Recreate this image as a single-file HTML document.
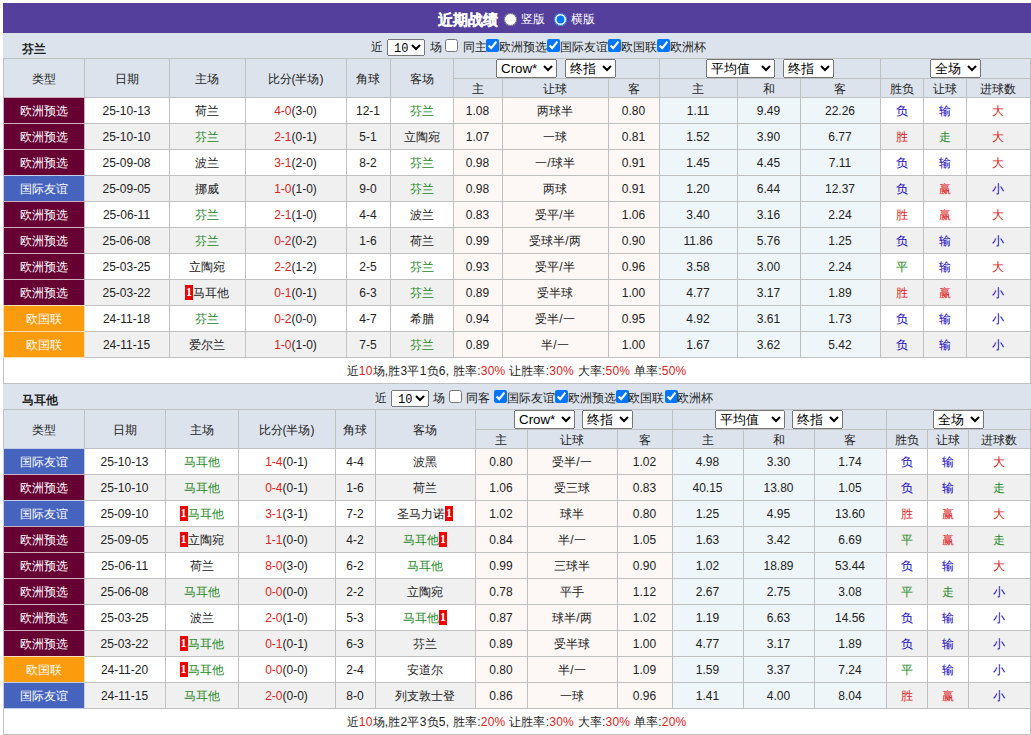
<!DOCTYPE html>
<html><head><meta charset="utf-8"><style>
html,body{margin:0;padding:0;background:#fff;overflow:hidden}
body{width:1031px;height:735px;position:relative;font-family:"Liberation Sans",sans-serif;font-size:12px;color:#222}
.c{position:absolute;border:1px solid #c0c0c0;text-align:center;white-space:nowrap;overflow:hidden}
.ty{border-color:rgba(255,255,255,.68);z-index:1}
.r{color:#d22}
.g{color:#282}
.rc{display:inline-block;background:#e00;color:#fff;width:8px;height:15px;line-height:15px;text-align:center;vertical-align:1px;font-family:"Liberation Serif",serif;font-size:12px;font-weight:bold}
.top{position:absolute;left:3px;top:3px;width:1028px;height:30px;background:#54409c}
.bar{position:absolute;left:3px;width:1028px;height:25px;background:#dce3ed}
.tt{position:absolute;left:22px;height:25px;line-height:32px;font-weight:bold}
.ab{position:absolute}
.wt{color:#fff}
.b{font-weight:bold}
.ft{position:absolute;line-height:21px;padding-top:1px;white-space:nowrap}
.fs{position:absolute;width:38px;height:17px;font-family:"Liberation Mono",monospace;font-size:12px;padding:1px 0 0 2px;margin:0}
.cb{position:absolute;margin:0;width:13px;height:13px}
.sel{position:absolute;z-index:2;height:19px;font-family:"Liberation Sans",sans-serif;font-size:13.333px;padding:0;margin:0}
</style></head><body>
<div class="top"></div>
<div class="ab wt b" style="left:438px;top:5px;font-size:15px;line-height:30px;-webkit-text-stroke:.3px #fff">近期战绩</div>
<input type="radio" name="v" class="ab" style="left:504px;top:13px;margin:0;width:13px;height:13px">
<div class="ab wt" style="left:521px;top:4px;line-height:31px">竖版</div>
<input type="radio" name="v" checked class="ab" style="left:554px;top:13px;margin:0;width:13px;height:13px">
<div class="ab wt" style="left:571px;top:4px;line-height:31px">横版</div>
<div class="bar" style="top:33px"></div>
<div class="tt" style="top:33px">芬兰</div>
<div class="ft" style="left:371px;top:36px">近</div>
<select class="fs" style="left:387px;top:39px"><option>10</option></select>
<div class="ft" style="left:430px;top:36px">场</div>
<input type="checkbox" class="cb" style="left:445px;top:39px">
<div class="ft" style="left:463px;top:36px">同主</div>
<input type="checkbox" checked class="cb" style="left:486px;top:39px">
<div class="ft" style="left:499px;top:36px">欧洲预选</div>
<input type="checkbox" checked class="cb" style="left:547px;top:39px">
<div class="ft" style="left:560px;top:36px">国际友谊</div>
<input type="checkbox" checked class="cb" style="left:608px;top:39px">
<div class="ft" style="left:621px;top:36px">欧国联</div>
<input type="checkbox" checked class="cb" style="left:657px;top:39px">
<div class="ft" style="left:670px;top:36px">欧洲杯</div>
<select class="sel" style="left:496px;top:59px;width:61px"><option>Crow*</option></select>
<select class="sel" style="left:565px;top:59px;width:51px"><option>终指</option></select>
<select class="sel" style="left:706px;top:59px;width:69px"><option>平均值</option></select>
<select class="sel" style="left:783px;top:59px;width:51px"><option>终指</option></select>
<select class="sel" style="left:930px;top:59px;width:51px"><option>全场</option></select>
<div class="c h" style="left:3px;top:58px;width:79px;padding-right:1px;height:37px;padding-top:1px;line-height:38px;background:#dce3ed;">类型</div>
<div class="c h" style="left:84px;top:58px;width:83px;padding-right:1px;height:37px;padding-top:1px;line-height:38px;background:#dce3ed;">日期</div>
<div class="c h" style="left:169px;top:58px;width:74px;padding-right:1px;height:37px;padding-top:1px;line-height:38px;background:#dce3ed;">主场</div>
<div class="c h" style="left:245px;top:58px;width:99px;padding-right:1px;height:37px;padding-top:1px;line-height:38px;background:#dce3ed;">比分(半场)</div>
<div class="c h" style="left:346px;top:58px;width:42px;padding-right:1px;height:37px;padding-top:1px;line-height:38px;background:#dce3ed;">角球</div>
<div class="c h" style="left:390px;top:58px;width:61px;padding-right:1px;height:37px;padding-top:1px;line-height:38px;background:#dce3ed;">客场</div>
<div class="c h" style="left:453px;top:58px;width:204px;padding-right:1px;height:18px;padding-top:1px;line-height:19px;background:#dce3ed;"></div>
<div class="c h" style="left:659px;top:58px;width:219px;padding-right:1px;height:18px;padding-top:1px;line-height:19px;background:#dce3ed;"></div>
<div class="c h" style="left:880px;top:58px;width:148px;padding-right:1px;height:18px;padding-top:1px;line-height:19px;background:#dce3ed;"></div>
<div class="c h" style="left:453px;top:78px;width:47px;padding-right:1px;height:17px;padding-top:1px;line-height:18px;background:#dce3ed;">主</div>
<div class="c h" style="left:502px;top:78px;width:104px;padding-right:1px;height:17px;padding-top:1px;line-height:18px;background:#dce3ed;">让球</div>
<div class="c h" style="left:608px;top:78px;width:49px;padding-right:1px;height:17px;padding-top:1px;line-height:18px;background:#dce3ed;">客</div>
<div class="c h" style="left:659px;top:78px;width:76px;padding-right:1px;height:17px;padding-top:1px;line-height:18px;background:#dce3ed;">主</div>
<div class="c h" style="left:737px;top:78px;width:61px;padding-right:1px;height:17px;padding-top:1px;line-height:18px;background:#dce3ed;">和</div>
<div class="c h" style="left:800px;top:78px;width:78px;padding-right:1px;height:17px;padding-top:1px;line-height:18px;background:#dce3ed;">客</div>
<div class="c h" style="left:880px;top:78px;width:41px;padding-right:1px;height:17px;padding-top:1px;line-height:18px;background:#dce3ed;">胜负</div>
<div class="c h" style="left:923px;top:78px;width:41px;padding-right:1px;height:17px;padding-top:1px;line-height:18px;background:#dce3ed;">让球</div>
<div class="c h" style="left:966px;top:78px;width:62px;padding-right:1px;height:17px;padding-top:1px;line-height:18px;background:#dce3ed;">进球数</div>
<div class="c ty" style="left:3px;top:97px;width:79px;padding-right:1px;height:24px;padding-top:1px;line-height:25px;background:#660033;color:#fff;">欧洲预选</div>
<div class="c" style="left:84px;top:97px;width:83px;padding-right:1px;height:24px;padding-top:1px;line-height:25px;background:#fff;">25-10-13</div>
<div class="c" style="left:169px;top:97px;width:74px;padding-right:1px;height:24px;padding-top:1px;line-height:25px;background:#fff;">荷兰</div>
<div class="c" style="left:245px;top:97px;width:99px;padding-right:1px;height:24px;padding-top:1px;line-height:25px;background:#fff;"><span class="r">4-0</span>(3-0)</div>
<div class="c" style="left:346px;top:97px;width:42px;padding-right:1px;height:24px;padding-top:1px;line-height:25px;background:#fff;">12-1</div>
<div class="c" style="left:390px;top:97px;width:61px;padding-right:1px;height:24px;padding-top:1px;line-height:25px;background:#fff;"><span class="g">芬兰</span></div>
<div class="c" style="left:453px;top:97px;width:47px;padding-right:1px;height:24px;padding-top:1px;line-height:25px;background:#fdf8f6;">1.08</div>
<div class="c" style="left:502px;top:97px;width:104px;padding-right:1px;height:24px;padding-top:1px;line-height:25px;background:#fdf8f6;">两球半</div>
<div class="c" style="left:608px;top:97px;width:49px;padding-right:1px;height:24px;padding-top:1px;line-height:25px;background:#fdf8f6;">0.80</div>
<div class="c" style="left:659px;top:97px;width:76px;padding-right:1px;height:24px;padding-top:1px;line-height:25px;background:#eef6fa;">1.11</div>
<div class="c" style="left:737px;top:97px;width:61px;padding-right:1px;height:24px;padding-top:1px;line-height:25px;background:#eef6fa;">9.49</div>
<div class="c" style="left:800px;top:97px;width:78px;padding-right:1px;height:24px;padding-top:1px;line-height:25px;background:#eef6fa;">22.26</div>
<div class="c" style="left:880px;top:97px;width:41px;padding-right:1px;height:24px;padding-top:1px;line-height:25px;background:#fff;color:#10b;">负</div>
<div class="c" style="left:923px;top:97px;width:41px;padding-right:1px;height:24px;padding-top:1px;line-height:25px;background:#fff;color:#10b;">输</div>
<div class="c" style="left:966px;top:97px;width:62px;padding-right:1px;height:24px;padding-top:1px;line-height:25px;background:#fff;color:#d22;">大</div>
<div class="c ty" style="left:3px;top:123px;width:79px;padding-right:1px;height:24px;padding-top:1px;line-height:25px;background:#660033;color:#fff;">欧洲预选</div>
<div class="c" style="left:84px;top:123px;width:83px;padding-right:1px;height:24px;padding-top:1px;line-height:25px;background:#f0f0f0;">25-10-10</div>
<div class="c" style="left:169px;top:123px;width:74px;padding-right:1px;height:24px;padding-top:1px;line-height:25px;background:#f0f0f0;"><span class="g">芬兰</span></div>
<div class="c" style="left:245px;top:123px;width:99px;padding-right:1px;height:24px;padding-top:1px;line-height:25px;background:#f0f0f0;"><span class="r">2-1</span>(0-1)</div>
<div class="c" style="left:346px;top:123px;width:42px;padding-right:1px;height:24px;padding-top:1px;line-height:25px;background:#f0f0f0;">5-1</div>
<div class="c" style="left:390px;top:123px;width:61px;padding-right:1px;height:24px;padding-top:1px;line-height:25px;background:#f0f0f0;">立陶宛</div>
<div class="c" style="left:453px;top:123px;width:47px;padding-right:1px;height:24px;padding-top:1px;line-height:25px;background:#fdf8f6;">1.07</div>
<div class="c" style="left:502px;top:123px;width:104px;padding-right:1px;height:24px;padding-top:1px;line-height:25px;background:#fdf8f6;">一球</div>
<div class="c" style="left:608px;top:123px;width:49px;padding-right:1px;height:24px;padding-top:1px;line-height:25px;background:#fdf8f6;">0.81</div>
<div class="c" style="left:659px;top:123px;width:76px;padding-right:1px;height:24px;padding-top:1px;line-height:25px;background:#eef6fa;">1.52</div>
<div class="c" style="left:737px;top:123px;width:61px;padding-right:1px;height:24px;padding-top:1px;line-height:25px;background:#eef6fa;">3.90</div>
<div class="c" style="left:800px;top:123px;width:78px;padding-right:1px;height:24px;padding-top:1px;line-height:25px;background:#eef6fa;">6.77</div>
<div class="c" style="left:880px;top:123px;width:41px;padding-right:1px;height:24px;padding-top:1px;line-height:25px;background:#f0f0f0;color:#d22;">胜</div>
<div class="c" style="left:923px;top:123px;width:41px;padding-right:1px;height:24px;padding-top:1px;line-height:25px;background:#f0f0f0;color:#282;">走</div>
<div class="c" style="left:966px;top:123px;width:62px;padding-right:1px;height:24px;padding-top:1px;line-height:25px;background:#f0f0f0;color:#d22;">大</div>
<div class="c ty" style="left:3px;top:149px;width:79px;padding-right:1px;height:24px;padding-top:1px;line-height:25px;background:#660033;color:#fff;">欧洲预选</div>
<div class="c" style="left:84px;top:149px;width:83px;padding-right:1px;height:24px;padding-top:1px;line-height:25px;background:#fff;">25-09-08</div>
<div class="c" style="left:169px;top:149px;width:74px;padding-right:1px;height:24px;padding-top:1px;line-height:25px;background:#fff;">波兰</div>
<div class="c" style="left:245px;top:149px;width:99px;padding-right:1px;height:24px;padding-top:1px;line-height:25px;background:#fff;"><span class="r">3-1</span>(2-0)</div>
<div class="c" style="left:346px;top:149px;width:42px;padding-right:1px;height:24px;padding-top:1px;line-height:25px;background:#fff;">8-2</div>
<div class="c" style="left:390px;top:149px;width:61px;padding-right:1px;height:24px;padding-top:1px;line-height:25px;background:#fff;"><span class="g">芬兰</span></div>
<div class="c" style="left:453px;top:149px;width:47px;padding-right:1px;height:24px;padding-top:1px;line-height:25px;background:#fdf8f6;">0.98</div>
<div class="c" style="left:502px;top:149px;width:104px;padding-right:1px;height:24px;padding-top:1px;line-height:25px;background:#fdf8f6;">一/球半</div>
<div class="c" style="left:608px;top:149px;width:49px;padding-right:1px;height:24px;padding-top:1px;line-height:25px;background:#fdf8f6;">0.91</div>
<div class="c" style="left:659px;top:149px;width:76px;padding-right:1px;height:24px;padding-top:1px;line-height:25px;background:#eef6fa;">1.45</div>
<div class="c" style="left:737px;top:149px;width:61px;padding-right:1px;height:24px;padding-top:1px;line-height:25px;background:#eef6fa;">4.45</div>
<div class="c" style="left:800px;top:149px;width:78px;padding-right:1px;height:24px;padding-top:1px;line-height:25px;background:#eef6fa;">7.11</div>
<div class="c" style="left:880px;top:149px;width:41px;padding-right:1px;height:24px;padding-top:1px;line-height:25px;background:#fff;color:#10b;">负</div>
<div class="c" style="left:923px;top:149px;width:41px;padding-right:1px;height:24px;padding-top:1px;line-height:25px;background:#fff;color:#10b;">输</div>
<div class="c" style="left:966px;top:149px;width:62px;padding-right:1px;height:24px;padding-top:1px;line-height:25px;background:#fff;color:#d22;">大</div>
<div class="c ty" style="left:3px;top:175px;width:79px;padding-right:1px;height:24px;padding-top:1px;line-height:25px;background:#4664bd;color:#fff;">国际友谊</div>
<div class="c" style="left:84px;top:175px;width:83px;padding-right:1px;height:24px;padding-top:1px;line-height:25px;background:#f0f0f0;">25-09-05</div>
<div class="c" style="left:169px;top:175px;width:74px;padding-right:1px;height:24px;padding-top:1px;line-height:25px;background:#f0f0f0;">挪威</div>
<div class="c" style="left:245px;top:175px;width:99px;padding-right:1px;height:24px;padding-top:1px;line-height:25px;background:#f0f0f0;"><span class="r">1-0</span>(1-0)</div>
<div class="c" style="left:346px;top:175px;width:42px;padding-right:1px;height:24px;padding-top:1px;line-height:25px;background:#f0f0f0;">9-0</div>
<div class="c" style="left:390px;top:175px;width:61px;padding-right:1px;height:24px;padding-top:1px;line-height:25px;background:#f0f0f0;"><span class="g">芬兰</span></div>
<div class="c" style="left:453px;top:175px;width:47px;padding-right:1px;height:24px;padding-top:1px;line-height:25px;background:#fdf8f6;">0.98</div>
<div class="c" style="left:502px;top:175px;width:104px;padding-right:1px;height:24px;padding-top:1px;line-height:25px;background:#fdf8f6;">两球</div>
<div class="c" style="left:608px;top:175px;width:49px;padding-right:1px;height:24px;padding-top:1px;line-height:25px;background:#fdf8f6;">0.91</div>
<div class="c" style="left:659px;top:175px;width:76px;padding-right:1px;height:24px;padding-top:1px;line-height:25px;background:#eef6fa;">1.20</div>
<div class="c" style="left:737px;top:175px;width:61px;padding-right:1px;height:24px;padding-top:1px;line-height:25px;background:#eef6fa;">6.44</div>
<div class="c" style="left:800px;top:175px;width:78px;padding-right:1px;height:24px;padding-top:1px;line-height:25px;background:#eef6fa;">12.37</div>
<div class="c" style="left:880px;top:175px;width:41px;padding-right:1px;height:24px;padding-top:1px;line-height:25px;background:#f0f0f0;color:#10b;">负</div>
<div class="c" style="left:923px;top:175px;width:41px;padding-right:1px;height:24px;padding-top:1px;line-height:25px;background:#f0f0f0;color:#d22;">赢</div>
<div class="c" style="left:966px;top:175px;width:62px;padding-right:1px;height:24px;padding-top:1px;line-height:25px;background:#f0f0f0;color:#10b;">小</div>
<div class="c ty" style="left:3px;top:201px;width:79px;padding-right:1px;height:24px;padding-top:1px;line-height:25px;background:#660033;color:#fff;">欧洲预选</div>
<div class="c" style="left:84px;top:201px;width:83px;padding-right:1px;height:24px;padding-top:1px;line-height:25px;background:#fff;">25-06-11</div>
<div class="c" style="left:169px;top:201px;width:74px;padding-right:1px;height:24px;padding-top:1px;line-height:25px;background:#fff;"><span class="g">芬兰</span></div>
<div class="c" style="left:245px;top:201px;width:99px;padding-right:1px;height:24px;padding-top:1px;line-height:25px;background:#fff;"><span class="r">2-1</span>(1-0)</div>
<div class="c" style="left:346px;top:201px;width:42px;padding-right:1px;height:24px;padding-top:1px;line-height:25px;background:#fff;">4-4</div>
<div class="c" style="left:390px;top:201px;width:61px;padding-right:1px;height:24px;padding-top:1px;line-height:25px;background:#fff;">波兰</div>
<div class="c" style="left:453px;top:201px;width:47px;padding-right:1px;height:24px;padding-top:1px;line-height:25px;background:#fdf8f6;">0.83</div>
<div class="c" style="left:502px;top:201px;width:104px;padding-right:1px;height:24px;padding-top:1px;line-height:25px;background:#fdf8f6;">受平/半</div>
<div class="c" style="left:608px;top:201px;width:49px;padding-right:1px;height:24px;padding-top:1px;line-height:25px;background:#fdf8f6;">1.06</div>
<div class="c" style="left:659px;top:201px;width:76px;padding-right:1px;height:24px;padding-top:1px;line-height:25px;background:#eef6fa;">3.40</div>
<div class="c" style="left:737px;top:201px;width:61px;padding-right:1px;height:24px;padding-top:1px;line-height:25px;background:#eef6fa;">3.16</div>
<div class="c" style="left:800px;top:201px;width:78px;padding-right:1px;height:24px;padding-top:1px;line-height:25px;background:#eef6fa;">2.24</div>
<div class="c" style="left:880px;top:201px;width:41px;padding-right:1px;height:24px;padding-top:1px;line-height:25px;background:#fff;color:#d22;">胜</div>
<div class="c" style="left:923px;top:201px;width:41px;padding-right:1px;height:24px;padding-top:1px;line-height:25px;background:#fff;color:#d22;">赢</div>
<div class="c" style="left:966px;top:201px;width:62px;padding-right:1px;height:24px;padding-top:1px;line-height:25px;background:#fff;color:#d22;">大</div>
<div class="c ty" style="left:3px;top:227px;width:79px;padding-right:1px;height:24px;padding-top:1px;line-height:25px;background:#660033;color:#fff;">欧洲预选</div>
<div class="c" style="left:84px;top:227px;width:83px;padding-right:1px;height:24px;padding-top:1px;line-height:25px;background:#f0f0f0;">25-06-08</div>
<div class="c" style="left:169px;top:227px;width:74px;padding-right:1px;height:24px;padding-top:1px;line-height:25px;background:#f0f0f0;"><span class="g">芬兰</span></div>
<div class="c" style="left:245px;top:227px;width:99px;padding-right:1px;height:24px;padding-top:1px;line-height:25px;background:#f0f0f0;"><span class="r">0-2</span>(0-2)</div>
<div class="c" style="left:346px;top:227px;width:42px;padding-right:1px;height:24px;padding-top:1px;line-height:25px;background:#f0f0f0;">1-6</div>
<div class="c" style="left:390px;top:227px;width:61px;padding-right:1px;height:24px;padding-top:1px;line-height:25px;background:#f0f0f0;">荷兰</div>
<div class="c" style="left:453px;top:227px;width:47px;padding-right:1px;height:24px;padding-top:1px;line-height:25px;background:#fdf8f6;">0.99</div>
<div class="c" style="left:502px;top:227px;width:104px;padding-right:1px;height:24px;padding-top:1px;line-height:25px;background:#fdf8f6;">受球半/两</div>
<div class="c" style="left:608px;top:227px;width:49px;padding-right:1px;height:24px;padding-top:1px;line-height:25px;background:#fdf8f6;">0.90</div>
<div class="c" style="left:659px;top:227px;width:76px;padding-right:1px;height:24px;padding-top:1px;line-height:25px;background:#eef6fa;">11.86</div>
<div class="c" style="left:737px;top:227px;width:61px;padding-right:1px;height:24px;padding-top:1px;line-height:25px;background:#eef6fa;">5.76</div>
<div class="c" style="left:800px;top:227px;width:78px;padding-right:1px;height:24px;padding-top:1px;line-height:25px;background:#eef6fa;">1.25</div>
<div class="c" style="left:880px;top:227px;width:41px;padding-right:1px;height:24px;padding-top:1px;line-height:25px;background:#f0f0f0;color:#10b;">负</div>
<div class="c" style="left:923px;top:227px;width:41px;padding-right:1px;height:24px;padding-top:1px;line-height:25px;background:#f0f0f0;color:#10b;">输</div>
<div class="c" style="left:966px;top:227px;width:62px;padding-right:1px;height:24px;padding-top:1px;line-height:25px;background:#f0f0f0;color:#10b;">小</div>
<div class="c ty" style="left:3px;top:253px;width:79px;padding-right:1px;height:24px;padding-top:1px;line-height:25px;background:#660033;color:#fff;">欧洲预选</div>
<div class="c" style="left:84px;top:253px;width:83px;padding-right:1px;height:24px;padding-top:1px;line-height:25px;background:#fff;">25-03-25</div>
<div class="c" style="left:169px;top:253px;width:74px;padding-right:1px;height:24px;padding-top:1px;line-height:25px;background:#fff;">立陶宛</div>
<div class="c" style="left:245px;top:253px;width:99px;padding-right:1px;height:24px;padding-top:1px;line-height:25px;background:#fff;"><span class="r">2-2</span>(1-2)</div>
<div class="c" style="left:346px;top:253px;width:42px;padding-right:1px;height:24px;padding-top:1px;line-height:25px;background:#fff;">2-5</div>
<div class="c" style="left:390px;top:253px;width:61px;padding-right:1px;height:24px;padding-top:1px;line-height:25px;background:#fff;"><span class="g">芬兰</span></div>
<div class="c" style="left:453px;top:253px;width:47px;padding-right:1px;height:24px;padding-top:1px;line-height:25px;background:#fdf8f6;">0.93</div>
<div class="c" style="left:502px;top:253px;width:104px;padding-right:1px;height:24px;padding-top:1px;line-height:25px;background:#fdf8f6;">受平/半</div>
<div class="c" style="left:608px;top:253px;width:49px;padding-right:1px;height:24px;padding-top:1px;line-height:25px;background:#fdf8f6;">0.96</div>
<div class="c" style="left:659px;top:253px;width:76px;padding-right:1px;height:24px;padding-top:1px;line-height:25px;background:#eef6fa;">3.58</div>
<div class="c" style="left:737px;top:253px;width:61px;padding-right:1px;height:24px;padding-top:1px;line-height:25px;background:#eef6fa;">3.00</div>
<div class="c" style="left:800px;top:253px;width:78px;padding-right:1px;height:24px;padding-top:1px;line-height:25px;background:#eef6fa;">2.24</div>
<div class="c" style="left:880px;top:253px;width:41px;padding-right:1px;height:24px;padding-top:1px;line-height:25px;background:#fff;color:#282;">平</div>
<div class="c" style="left:923px;top:253px;width:41px;padding-right:1px;height:24px;padding-top:1px;line-height:25px;background:#fff;color:#10b;">输</div>
<div class="c" style="left:966px;top:253px;width:62px;padding-right:1px;height:24px;padding-top:1px;line-height:25px;background:#fff;color:#d22;">大</div>
<div class="c ty" style="left:3px;top:279px;width:79px;padding-right:1px;height:24px;padding-top:1px;line-height:25px;background:#660033;color:#fff;">欧洲预选</div>
<div class="c" style="left:84px;top:279px;width:83px;padding-right:1px;height:24px;padding-top:1px;line-height:25px;background:#f0f0f0;">25-03-22</div>
<div class="c" style="left:169px;top:279px;width:74px;padding-right:1px;height:24px;padding-top:1px;line-height:25px;background:#f0f0f0;"><span class="rc">1</span>马耳他</div>
<div class="c" style="left:245px;top:279px;width:99px;padding-right:1px;height:24px;padding-top:1px;line-height:25px;background:#f0f0f0;"><span class="r">0-1</span>(0-1)</div>
<div class="c" style="left:346px;top:279px;width:42px;padding-right:1px;height:24px;padding-top:1px;line-height:25px;background:#f0f0f0;">6-3</div>
<div class="c" style="left:390px;top:279px;width:61px;padding-right:1px;height:24px;padding-top:1px;line-height:25px;background:#f0f0f0;"><span class="g">芬兰</span></div>
<div class="c" style="left:453px;top:279px;width:47px;padding-right:1px;height:24px;padding-top:1px;line-height:25px;background:#fdf8f6;">0.89</div>
<div class="c" style="left:502px;top:279px;width:104px;padding-right:1px;height:24px;padding-top:1px;line-height:25px;background:#fdf8f6;">受半球</div>
<div class="c" style="left:608px;top:279px;width:49px;padding-right:1px;height:24px;padding-top:1px;line-height:25px;background:#fdf8f6;">1.00</div>
<div class="c" style="left:659px;top:279px;width:76px;padding-right:1px;height:24px;padding-top:1px;line-height:25px;background:#eef6fa;">4.77</div>
<div class="c" style="left:737px;top:279px;width:61px;padding-right:1px;height:24px;padding-top:1px;line-height:25px;background:#eef6fa;">3.17</div>
<div class="c" style="left:800px;top:279px;width:78px;padding-right:1px;height:24px;padding-top:1px;line-height:25px;background:#eef6fa;">1.89</div>
<div class="c" style="left:880px;top:279px;width:41px;padding-right:1px;height:24px;padding-top:1px;line-height:25px;background:#f0f0f0;color:#d22;">胜</div>
<div class="c" style="left:923px;top:279px;width:41px;padding-right:1px;height:24px;padding-top:1px;line-height:25px;background:#f0f0f0;color:#d22;">赢</div>
<div class="c" style="left:966px;top:279px;width:62px;padding-right:1px;height:24px;padding-top:1px;line-height:25px;background:#f0f0f0;color:#10b;">小</div>
<div class="c ty" style="left:3px;top:305px;width:79px;padding-right:1px;height:24px;padding-top:1px;line-height:25px;background:#fa9c0d;color:#fff;">欧国联</div>
<div class="c" style="left:84px;top:305px;width:83px;padding-right:1px;height:24px;padding-top:1px;line-height:25px;background:#fff;">24-11-18</div>
<div class="c" style="left:169px;top:305px;width:74px;padding-right:1px;height:24px;padding-top:1px;line-height:25px;background:#fff;"><span class="g">芬兰</span></div>
<div class="c" style="left:245px;top:305px;width:99px;padding-right:1px;height:24px;padding-top:1px;line-height:25px;background:#fff;"><span class="r">0-2</span>(0-0)</div>
<div class="c" style="left:346px;top:305px;width:42px;padding-right:1px;height:24px;padding-top:1px;line-height:25px;background:#fff;">4-7</div>
<div class="c" style="left:390px;top:305px;width:61px;padding-right:1px;height:24px;padding-top:1px;line-height:25px;background:#fff;">希腊</div>
<div class="c" style="left:453px;top:305px;width:47px;padding-right:1px;height:24px;padding-top:1px;line-height:25px;background:#fdf8f6;">0.94</div>
<div class="c" style="left:502px;top:305px;width:104px;padding-right:1px;height:24px;padding-top:1px;line-height:25px;background:#fdf8f6;">受半/一</div>
<div class="c" style="left:608px;top:305px;width:49px;padding-right:1px;height:24px;padding-top:1px;line-height:25px;background:#fdf8f6;">0.95</div>
<div class="c" style="left:659px;top:305px;width:76px;padding-right:1px;height:24px;padding-top:1px;line-height:25px;background:#eef6fa;">4.92</div>
<div class="c" style="left:737px;top:305px;width:61px;padding-right:1px;height:24px;padding-top:1px;line-height:25px;background:#eef6fa;">3.61</div>
<div class="c" style="left:800px;top:305px;width:78px;padding-right:1px;height:24px;padding-top:1px;line-height:25px;background:#eef6fa;">1.73</div>
<div class="c" style="left:880px;top:305px;width:41px;padding-right:1px;height:24px;padding-top:1px;line-height:25px;background:#fff;color:#10b;">负</div>
<div class="c" style="left:923px;top:305px;width:41px;padding-right:1px;height:24px;padding-top:1px;line-height:25px;background:#fff;color:#10b;">输</div>
<div class="c" style="left:966px;top:305px;width:62px;padding-right:1px;height:24px;padding-top:1px;line-height:25px;background:#fff;color:#10b;">小</div>
<div class="c ty" style="left:3px;top:331px;width:79px;padding-right:1px;height:24px;padding-top:1px;line-height:25px;background:#fa9c0d;color:#fff;">欧国联</div>
<div class="c" style="left:84px;top:331px;width:83px;padding-right:1px;height:24px;padding-top:1px;line-height:25px;background:#f0f0f0;">24-11-15</div>
<div class="c" style="left:169px;top:331px;width:74px;padding-right:1px;height:24px;padding-top:1px;line-height:25px;background:#f0f0f0;">爱尔兰</div>
<div class="c" style="left:245px;top:331px;width:99px;padding-right:1px;height:24px;padding-top:1px;line-height:25px;background:#f0f0f0;"><span class="r">1-0</span>(1-0)</div>
<div class="c" style="left:346px;top:331px;width:42px;padding-right:1px;height:24px;padding-top:1px;line-height:25px;background:#f0f0f0;">7-5</div>
<div class="c" style="left:390px;top:331px;width:61px;padding-right:1px;height:24px;padding-top:1px;line-height:25px;background:#f0f0f0;"><span class="g">芬兰</span></div>
<div class="c" style="left:453px;top:331px;width:47px;padding-right:1px;height:24px;padding-top:1px;line-height:25px;background:#fdf8f6;">0.89</div>
<div class="c" style="left:502px;top:331px;width:104px;padding-right:1px;height:24px;padding-top:1px;line-height:25px;background:#fdf8f6;">半/一</div>
<div class="c" style="left:608px;top:331px;width:49px;padding-right:1px;height:24px;padding-top:1px;line-height:25px;background:#fdf8f6;">1.00</div>
<div class="c" style="left:659px;top:331px;width:76px;padding-right:1px;height:24px;padding-top:1px;line-height:25px;background:#eef6fa;">1.67</div>
<div class="c" style="left:737px;top:331px;width:61px;padding-right:1px;height:24px;padding-top:1px;line-height:25px;background:#eef6fa;">3.62</div>
<div class="c" style="left:800px;top:331px;width:78px;padding-right:1px;height:24px;padding-top:1px;line-height:25px;background:#eef6fa;">5.42</div>
<div class="c" style="left:880px;top:331px;width:41px;padding-right:1px;height:24px;padding-top:1px;line-height:25px;background:#f0f0f0;color:#10b;">负</div>
<div class="c" style="left:923px;top:331px;width:41px;padding-right:1px;height:24px;padding-top:1px;line-height:25px;background:#f0f0f0;color:#10b;">输</div>
<div class="c" style="left:966px;top:331px;width:62px;padding-right:1px;height:24px;padding-top:1px;line-height:25px;background:#f0f0f0;color:#10b;">小</div>
<div class="c" style="left:3px;top:357px;width:1025px;padding-right:1px;height:24px;padding-top:1px;line-height:25px;background:#fff;letter-spacing:.22px;">近<span class="r">10</span>场,胜3平1负6, 胜率:<span class="r">30%</span> 让胜率:<span class="r">30%</span> 大率:<span class="r">50%</span> 单率:<span class="r">50%</span></div>
<div class="bar" style="top:384px"></div>
<div class="tt" style="top:384px">马耳他</div>
<div class="ft" style="left:375px;top:387px">近</div>
<select class="fs" style="left:391px;top:390px"><option>10</option></select>
<div class="ft" style="left:433px;top:387px">场</div>
<input type="checkbox" class="cb" style="left:449px;top:390px">
<div class="ft" style="left:466px;top:387px">同客</div>
<input type="checkbox" checked class="cb" style="left:494px;top:390px">
<div class="ft" style="left:507px;top:387px">国际友谊</div>
<input type="checkbox" checked class="cb" style="left:555px;top:390px">
<div class="ft" style="left:568px;top:387px">欧洲预选</div>
<input type="checkbox" checked class="cb" style="left:616px;top:390px">
<div class="ft" style="left:628px;top:387px">欧国联</div>
<input type="checkbox" checked class="cb" style="left:665px;top:390px">
<div class="ft" style="left:677px;top:387px">欧洲杯</div>
<select class="sel" style="left:514px;top:410px;width:61px"><option>Crow*</option></select>
<select class="sel" style="left:582px;top:410px;width:51px"><option>终指</option></select>
<select class="sel" style="left:715px;top:410px;width:70px"><option>平均值</option></select>
<select class="sel" style="left:792px;top:410px;width:51px"><option>终指</option></select>
<select class="sel" style="left:933px;top:410px;width:51px"><option>全场</option></select>
<div class="c h" style="left:3px;top:409px;width:79px;padding-right:1px;height:37px;padding-top:1px;line-height:38px;background:#dce3ed;">类型</div>
<div class="c h" style="left:84px;top:409px;width:79px;padding-right:1px;height:37px;padding-top:1px;line-height:38px;background:#dce3ed;">日期</div>
<div class="c h" style="left:165px;top:409px;width:71px;padding-right:1px;height:37px;padding-top:1px;line-height:38px;background:#dce3ed;">主场</div>
<div class="c h" style="left:238px;top:409px;width:95px;padding-right:1px;height:37px;padding-top:1px;line-height:38px;background:#dce3ed;">比分(半场)</div>
<div class="c h" style="left:335px;top:409px;width:38px;padding-right:1px;height:37px;padding-top:1px;line-height:38px;background:#dce3ed;">角球</div>
<div class="c h" style="left:375px;top:409px;width:98px;padding-right:1px;height:37px;padding-top:1px;line-height:38px;background:#dce3ed;">客场</div>
<div class="c h" style="left:475px;top:409px;width:195px;padding-right:1px;height:18px;padding-top:1px;line-height:19px;background:#dce3ed;"></div>
<div class="c h" style="left:672px;top:409px;width:212px;padding-right:1px;height:18px;padding-top:1px;line-height:19px;background:#dce3ed;"></div>
<div class="c h" style="left:886px;top:409px;width:142px;padding-right:1px;height:18px;padding-top:1px;line-height:19px;background:#dce3ed;"></div>
<div class="c h" style="left:475px;top:429px;width:50px;padding-right:1px;height:17px;padding-top:1px;line-height:18px;background:#dce3ed;">主</div>
<div class="c h" style="left:527px;top:429px;width:88px;padding-right:1px;height:17px;padding-top:1px;line-height:18px;background:#dce3ed;">让球</div>
<div class="c h" style="left:617px;top:429px;width:53px;padding-right:1px;height:17px;padding-top:1px;line-height:18px;background:#dce3ed;">客</div>
<div class="c h" style="left:672px;top:429px;width:69px;padding-right:1px;height:17px;padding-top:1px;line-height:18px;background:#dce3ed;">主</div>
<div class="c h" style="left:743px;top:429px;width:69px;padding-right:1px;height:17px;padding-top:1px;line-height:18px;background:#dce3ed;">和</div>
<div class="c h" style="left:814px;top:429px;width:70px;padding-right:1px;height:17px;padding-top:1px;line-height:18px;background:#dce3ed;">客</div>
<div class="c h" style="left:886px;top:429px;width:39px;padding-right:1px;height:17px;padding-top:1px;line-height:18px;background:#dce3ed;">胜负</div>
<div class="c h" style="left:927px;top:429px;width:39px;padding-right:1px;height:17px;padding-top:1px;line-height:18px;background:#dce3ed;">让球</div>
<div class="c h" style="left:968px;top:429px;width:60px;padding-right:1px;height:17px;padding-top:1px;line-height:18px;background:#dce3ed;">进球数</div>
<div class="c ty" style="left:3px;top:448px;width:79px;padding-right:1px;height:24px;padding-top:1px;line-height:25px;background:#4664bd;color:#fff;">国际友谊</div>
<div class="c" style="left:84px;top:448px;width:79px;padding-right:1px;height:24px;padding-top:1px;line-height:25px;background:#fff;">25-10-13</div>
<div class="c" style="left:165px;top:448px;width:71px;padding-right:1px;height:24px;padding-top:1px;line-height:25px;background:#fff;"><span class="g">马耳他</span></div>
<div class="c" style="left:238px;top:448px;width:95px;padding-right:1px;height:24px;padding-top:1px;line-height:25px;background:#fff;"><span class="r">1-4</span>(0-1)</div>
<div class="c" style="left:335px;top:448px;width:38px;padding-right:1px;height:24px;padding-top:1px;line-height:25px;background:#fff;">4-4</div>
<div class="c" style="left:375px;top:448px;width:98px;padding-right:1px;height:24px;padding-top:1px;line-height:25px;background:#fff;">波黑</div>
<div class="c" style="left:475px;top:448px;width:50px;padding-right:1px;height:24px;padding-top:1px;line-height:25px;background:#fdf8f6;">0.80</div>
<div class="c" style="left:527px;top:448px;width:88px;padding-right:1px;height:24px;padding-top:1px;line-height:25px;background:#fdf8f6;">受半/一</div>
<div class="c" style="left:617px;top:448px;width:53px;padding-right:1px;height:24px;padding-top:1px;line-height:25px;background:#fdf8f6;">1.02</div>
<div class="c" style="left:672px;top:448px;width:69px;padding-right:1px;height:24px;padding-top:1px;line-height:25px;background:#eef6fa;">4.98</div>
<div class="c" style="left:743px;top:448px;width:69px;padding-right:1px;height:24px;padding-top:1px;line-height:25px;background:#eef6fa;">3.30</div>
<div class="c" style="left:814px;top:448px;width:70px;padding-right:1px;height:24px;padding-top:1px;line-height:25px;background:#eef6fa;">1.74</div>
<div class="c" style="left:886px;top:448px;width:39px;padding-right:1px;height:24px;padding-top:1px;line-height:25px;background:#fff;color:#10b;">负</div>
<div class="c" style="left:927px;top:448px;width:39px;padding-right:1px;height:24px;padding-top:1px;line-height:25px;background:#fff;color:#10b;">输</div>
<div class="c" style="left:968px;top:448px;width:60px;padding-right:1px;height:24px;padding-top:1px;line-height:25px;background:#fff;color:#d22;">大</div>
<div class="c ty" style="left:3px;top:474px;width:79px;padding-right:1px;height:24px;padding-top:1px;line-height:25px;background:#660033;color:#fff;">欧洲预选</div>
<div class="c" style="left:84px;top:474px;width:79px;padding-right:1px;height:24px;padding-top:1px;line-height:25px;background:#f0f0f0;">25-10-10</div>
<div class="c" style="left:165px;top:474px;width:71px;padding-right:1px;height:24px;padding-top:1px;line-height:25px;background:#f0f0f0;"><span class="g">马耳他</span></div>
<div class="c" style="left:238px;top:474px;width:95px;padding-right:1px;height:24px;padding-top:1px;line-height:25px;background:#f0f0f0;"><span class="r">0-4</span>(0-1)</div>
<div class="c" style="left:335px;top:474px;width:38px;padding-right:1px;height:24px;padding-top:1px;line-height:25px;background:#f0f0f0;">1-6</div>
<div class="c" style="left:375px;top:474px;width:98px;padding-right:1px;height:24px;padding-top:1px;line-height:25px;background:#f0f0f0;">荷兰</div>
<div class="c" style="left:475px;top:474px;width:50px;padding-right:1px;height:24px;padding-top:1px;line-height:25px;background:#fdf8f6;">1.06</div>
<div class="c" style="left:527px;top:474px;width:88px;padding-right:1px;height:24px;padding-top:1px;line-height:25px;background:#fdf8f6;">受三球</div>
<div class="c" style="left:617px;top:474px;width:53px;padding-right:1px;height:24px;padding-top:1px;line-height:25px;background:#fdf8f6;">0.83</div>
<div class="c" style="left:672px;top:474px;width:69px;padding-right:1px;height:24px;padding-top:1px;line-height:25px;background:#eef6fa;">40.15</div>
<div class="c" style="left:743px;top:474px;width:69px;padding-right:1px;height:24px;padding-top:1px;line-height:25px;background:#eef6fa;">13.80</div>
<div class="c" style="left:814px;top:474px;width:70px;padding-right:1px;height:24px;padding-top:1px;line-height:25px;background:#eef6fa;">1.05</div>
<div class="c" style="left:886px;top:474px;width:39px;padding-right:1px;height:24px;padding-top:1px;line-height:25px;background:#f0f0f0;color:#10b;">负</div>
<div class="c" style="left:927px;top:474px;width:39px;padding-right:1px;height:24px;padding-top:1px;line-height:25px;background:#f0f0f0;color:#10b;">输</div>
<div class="c" style="left:968px;top:474px;width:60px;padding-right:1px;height:24px;padding-top:1px;line-height:25px;background:#f0f0f0;color:#282;">走</div>
<div class="c ty" style="left:3px;top:500px;width:79px;padding-right:1px;height:24px;padding-top:1px;line-height:25px;background:#4664bd;color:#fff;">国际友谊</div>
<div class="c" style="left:84px;top:500px;width:79px;padding-right:1px;height:24px;padding-top:1px;line-height:25px;background:#fff;">25-09-10</div>
<div class="c" style="left:165px;top:500px;width:71px;padding-right:1px;height:24px;padding-top:1px;line-height:25px;background:#fff;"><span class="rc">1</span><span class="g">马耳他</span></div>
<div class="c" style="left:238px;top:500px;width:95px;padding-right:1px;height:24px;padding-top:1px;line-height:25px;background:#fff;"><span class="r">3-1</span>(3-1)</div>
<div class="c" style="left:335px;top:500px;width:38px;padding-right:1px;height:24px;padding-top:1px;line-height:25px;background:#fff;">7-2</div>
<div class="c" style="left:375px;top:500px;width:98px;padding-right:1px;height:24px;padding-top:1px;line-height:25px;background:#fff;">圣马力诺<span class="rc">1</span></div>
<div class="c" style="left:475px;top:500px;width:50px;padding-right:1px;height:24px;padding-top:1px;line-height:25px;background:#fdf8f6;">1.02</div>
<div class="c" style="left:527px;top:500px;width:88px;padding-right:1px;height:24px;padding-top:1px;line-height:25px;background:#fdf8f6;">球半</div>
<div class="c" style="left:617px;top:500px;width:53px;padding-right:1px;height:24px;padding-top:1px;line-height:25px;background:#fdf8f6;">0.80</div>
<div class="c" style="left:672px;top:500px;width:69px;padding-right:1px;height:24px;padding-top:1px;line-height:25px;background:#eef6fa;">1.25</div>
<div class="c" style="left:743px;top:500px;width:69px;padding-right:1px;height:24px;padding-top:1px;line-height:25px;background:#eef6fa;">4.95</div>
<div class="c" style="left:814px;top:500px;width:70px;padding-right:1px;height:24px;padding-top:1px;line-height:25px;background:#eef6fa;">13.60</div>
<div class="c" style="left:886px;top:500px;width:39px;padding-right:1px;height:24px;padding-top:1px;line-height:25px;background:#fff;color:#d22;">胜</div>
<div class="c" style="left:927px;top:500px;width:39px;padding-right:1px;height:24px;padding-top:1px;line-height:25px;background:#fff;color:#d22;">赢</div>
<div class="c" style="left:968px;top:500px;width:60px;padding-right:1px;height:24px;padding-top:1px;line-height:25px;background:#fff;color:#d22;">大</div>
<div class="c ty" style="left:3px;top:526px;width:79px;padding-right:1px;height:24px;padding-top:1px;line-height:25px;background:#660033;color:#fff;">欧洲预选</div>
<div class="c" style="left:84px;top:526px;width:79px;padding-right:1px;height:24px;padding-top:1px;line-height:25px;background:#f0f0f0;">25-09-05</div>
<div class="c" style="left:165px;top:526px;width:71px;padding-right:1px;height:24px;padding-top:1px;line-height:25px;background:#f0f0f0;"><span class="rc">1</span>立陶宛</div>
<div class="c" style="left:238px;top:526px;width:95px;padding-right:1px;height:24px;padding-top:1px;line-height:25px;background:#f0f0f0;"><span class="r">1-1</span>(0-0)</div>
<div class="c" style="left:335px;top:526px;width:38px;padding-right:1px;height:24px;padding-top:1px;line-height:25px;background:#f0f0f0;">4-2</div>
<div class="c" style="left:375px;top:526px;width:98px;padding-right:1px;height:24px;padding-top:1px;line-height:25px;background:#f0f0f0;"><span class="g">马耳他</span><span class="rc">1</span></div>
<div class="c" style="left:475px;top:526px;width:50px;padding-right:1px;height:24px;padding-top:1px;line-height:25px;background:#fdf8f6;">0.84</div>
<div class="c" style="left:527px;top:526px;width:88px;padding-right:1px;height:24px;padding-top:1px;line-height:25px;background:#fdf8f6;">半/一</div>
<div class="c" style="left:617px;top:526px;width:53px;padding-right:1px;height:24px;padding-top:1px;line-height:25px;background:#fdf8f6;">1.05</div>
<div class="c" style="left:672px;top:526px;width:69px;padding-right:1px;height:24px;padding-top:1px;line-height:25px;background:#eef6fa;">1.63</div>
<div class="c" style="left:743px;top:526px;width:69px;padding-right:1px;height:24px;padding-top:1px;line-height:25px;background:#eef6fa;">3.42</div>
<div class="c" style="left:814px;top:526px;width:70px;padding-right:1px;height:24px;padding-top:1px;line-height:25px;background:#eef6fa;">6.69</div>
<div class="c" style="left:886px;top:526px;width:39px;padding-right:1px;height:24px;padding-top:1px;line-height:25px;background:#f0f0f0;color:#282;">平</div>
<div class="c" style="left:927px;top:526px;width:39px;padding-right:1px;height:24px;padding-top:1px;line-height:25px;background:#f0f0f0;color:#d22;">赢</div>
<div class="c" style="left:968px;top:526px;width:60px;padding-right:1px;height:24px;padding-top:1px;line-height:25px;background:#f0f0f0;color:#282;">走</div>
<div class="c ty" style="left:3px;top:552px;width:79px;padding-right:1px;height:24px;padding-top:1px;line-height:25px;background:#660033;color:#fff;">欧洲预选</div>
<div class="c" style="left:84px;top:552px;width:79px;padding-right:1px;height:24px;padding-top:1px;line-height:25px;background:#fff;">25-06-11</div>
<div class="c" style="left:165px;top:552px;width:71px;padding-right:1px;height:24px;padding-top:1px;line-height:25px;background:#fff;">荷兰</div>
<div class="c" style="left:238px;top:552px;width:95px;padding-right:1px;height:24px;padding-top:1px;line-height:25px;background:#fff;"><span class="r">8-0</span>(3-0)</div>
<div class="c" style="left:335px;top:552px;width:38px;padding-right:1px;height:24px;padding-top:1px;line-height:25px;background:#fff;">6-2</div>
<div class="c" style="left:375px;top:552px;width:98px;padding-right:1px;height:24px;padding-top:1px;line-height:25px;background:#fff;"><span class="g">马耳他</span></div>
<div class="c" style="left:475px;top:552px;width:50px;padding-right:1px;height:24px;padding-top:1px;line-height:25px;background:#fdf8f6;">0.99</div>
<div class="c" style="left:527px;top:552px;width:88px;padding-right:1px;height:24px;padding-top:1px;line-height:25px;background:#fdf8f6;">三球半</div>
<div class="c" style="left:617px;top:552px;width:53px;padding-right:1px;height:24px;padding-top:1px;line-height:25px;background:#fdf8f6;">0.90</div>
<div class="c" style="left:672px;top:552px;width:69px;padding-right:1px;height:24px;padding-top:1px;line-height:25px;background:#eef6fa;">1.02</div>
<div class="c" style="left:743px;top:552px;width:69px;padding-right:1px;height:24px;padding-top:1px;line-height:25px;background:#eef6fa;">18.89</div>
<div class="c" style="left:814px;top:552px;width:70px;padding-right:1px;height:24px;padding-top:1px;line-height:25px;background:#eef6fa;">53.44</div>
<div class="c" style="left:886px;top:552px;width:39px;padding-right:1px;height:24px;padding-top:1px;line-height:25px;background:#fff;color:#10b;">负</div>
<div class="c" style="left:927px;top:552px;width:39px;padding-right:1px;height:24px;padding-top:1px;line-height:25px;background:#fff;color:#10b;">输</div>
<div class="c" style="left:968px;top:552px;width:60px;padding-right:1px;height:24px;padding-top:1px;line-height:25px;background:#fff;color:#d22;">大</div>
<div class="c ty" style="left:3px;top:578px;width:79px;padding-right:1px;height:24px;padding-top:1px;line-height:25px;background:#660033;color:#fff;">欧洲预选</div>
<div class="c" style="left:84px;top:578px;width:79px;padding-right:1px;height:24px;padding-top:1px;line-height:25px;background:#f0f0f0;">25-06-08</div>
<div class="c" style="left:165px;top:578px;width:71px;padding-right:1px;height:24px;padding-top:1px;line-height:25px;background:#f0f0f0;"><span class="g">马耳他</span></div>
<div class="c" style="left:238px;top:578px;width:95px;padding-right:1px;height:24px;padding-top:1px;line-height:25px;background:#f0f0f0;"><span class="r">0-0</span>(0-0)</div>
<div class="c" style="left:335px;top:578px;width:38px;padding-right:1px;height:24px;padding-top:1px;line-height:25px;background:#f0f0f0;">2-2</div>
<div class="c" style="left:375px;top:578px;width:98px;padding-right:1px;height:24px;padding-top:1px;line-height:25px;background:#f0f0f0;">立陶宛</div>
<div class="c" style="left:475px;top:578px;width:50px;padding-right:1px;height:24px;padding-top:1px;line-height:25px;background:#fdf8f6;">0.78</div>
<div class="c" style="left:527px;top:578px;width:88px;padding-right:1px;height:24px;padding-top:1px;line-height:25px;background:#fdf8f6;">平手</div>
<div class="c" style="left:617px;top:578px;width:53px;padding-right:1px;height:24px;padding-top:1px;line-height:25px;background:#fdf8f6;">1.12</div>
<div class="c" style="left:672px;top:578px;width:69px;padding-right:1px;height:24px;padding-top:1px;line-height:25px;background:#eef6fa;">2.67</div>
<div class="c" style="left:743px;top:578px;width:69px;padding-right:1px;height:24px;padding-top:1px;line-height:25px;background:#eef6fa;">2.75</div>
<div class="c" style="left:814px;top:578px;width:70px;padding-right:1px;height:24px;padding-top:1px;line-height:25px;background:#eef6fa;">3.08</div>
<div class="c" style="left:886px;top:578px;width:39px;padding-right:1px;height:24px;padding-top:1px;line-height:25px;background:#f0f0f0;color:#282;">平</div>
<div class="c" style="left:927px;top:578px;width:39px;padding-right:1px;height:24px;padding-top:1px;line-height:25px;background:#f0f0f0;color:#282;">走</div>
<div class="c" style="left:968px;top:578px;width:60px;padding-right:1px;height:24px;padding-top:1px;line-height:25px;background:#f0f0f0;color:#10b;">小</div>
<div class="c ty" style="left:3px;top:604px;width:79px;padding-right:1px;height:24px;padding-top:1px;line-height:25px;background:#660033;color:#fff;">欧洲预选</div>
<div class="c" style="left:84px;top:604px;width:79px;padding-right:1px;height:24px;padding-top:1px;line-height:25px;background:#fff;">25-03-25</div>
<div class="c" style="left:165px;top:604px;width:71px;padding-right:1px;height:24px;padding-top:1px;line-height:25px;background:#fff;">波兰</div>
<div class="c" style="left:238px;top:604px;width:95px;padding-right:1px;height:24px;padding-top:1px;line-height:25px;background:#fff;"><span class="r">2-0</span>(1-0)</div>
<div class="c" style="left:335px;top:604px;width:38px;padding-right:1px;height:24px;padding-top:1px;line-height:25px;background:#fff;">5-3</div>
<div class="c" style="left:375px;top:604px;width:98px;padding-right:1px;height:24px;padding-top:1px;line-height:25px;background:#fff;"><span class="g">马耳他</span><span class="rc">1</span></div>
<div class="c" style="left:475px;top:604px;width:50px;padding-right:1px;height:24px;padding-top:1px;line-height:25px;background:#fdf8f6;">0.87</div>
<div class="c" style="left:527px;top:604px;width:88px;padding-right:1px;height:24px;padding-top:1px;line-height:25px;background:#fdf8f6;">球半/两</div>
<div class="c" style="left:617px;top:604px;width:53px;padding-right:1px;height:24px;padding-top:1px;line-height:25px;background:#fdf8f6;">1.02</div>
<div class="c" style="left:672px;top:604px;width:69px;padding-right:1px;height:24px;padding-top:1px;line-height:25px;background:#eef6fa;">1.19</div>
<div class="c" style="left:743px;top:604px;width:69px;padding-right:1px;height:24px;padding-top:1px;line-height:25px;background:#eef6fa;">6.63</div>
<div class="c" style="left:814px;top:604px;width:70px;padding-right:1px;height:24px;padding-top:1px;line-height:25px;background:#eef6fa;">14.56</div>
<div class="c" style="left:886px;top:604px;width:39px;padding-right:1px;height:24px;padding-top:1px;line-height:25px;background:#fff;color:#10b;">负</div>
<div class="c" style="left:927px;top:604px;width:39px;padding-right:1px;height:24px;padding-top:1px;line-height:25px;background:#fff;color:#10b;">输</div>
<div class="c" style="left:968px;top:604px;width:60px;padding-right:1px;height:24px;padding-top:1px;line-height:25px;background:#fff;color:#10b;">小</div>
<div class="c ty" style="left:3px;top:630px;width:79px;padding-right:1px;height:24px;padding-top:1px;line-height:25px;background:#660033;color:#fff;">欧洲预选</div>
<div class="c" style="left:84px;top:630px;width:79px;padding-right:1px;height:24px;padding-top:1px;line-height:25px;background:#f0f0f0;">25-03-22</div>
<div class="c" style="left:165px;top:630px;width:71px;padding-right:1px;height:24px;padding-top:1px;line-height:25px;background:#f0f0f0;"><span class="rc">1</span><span class="g">马耳他</span></div>
<div class="c" style="left:238px;top:630px;width:95px;padding-right:1px;height:24px;padding-top:1px;line-height:25px;background:#f0f0f0;"><span class="r">0-1</span>(0-1)</div>
<div class="c" style="left:335px;top:630px;width:38px;padding-right:1px;height:24px;padding-top:1px;line-height:25px;background:#f0f0f0;">6-3</div>
<div class="c" style="left:375px;top:630px;width:98px;padding-right:1px;height:24px;padding-top:1px;line-height:25px;background:#f0f0f0;">芬兰</div>
<div class="c" style="left:475px;top:630px;width:50px;padding-right:1px;height:24px;padding-top:1px;line-height:25px;background:#fdf8f6;">0.89</div>
<div class="c" style="left:527px;top:630px;width:88px;padding-right:1px;height:24px;padding-top:1px;line-height:25px;background:#fdf8f6;">受半球</div>
<div class="c" style="left:617px;top:630px;width:53px;padding-right:1px;height:24px;padding-top:1px;line-height:25px;background:#fdf8f6;">1.00</div>
<div class="c" style="left:672px;top:630px;width:69px;padding-right:1px;height:24px;padding-top:1px;line-height:25px;background:#eef6fa;">4.77</div>
<div class="c" style="left:743px;top:630px;width:69px;padding-right:1px;height:24px;padding-top:1px;line-height:25px;background:#eef6fa;">3.17</div>
<div class="c" style="left:814px;top:630px;width:70px;padding-right:1px;height:24px;padding-top:1px;line-height:25px;background:#eef6fa;">1.89</div>
<div class="c" style="left:886px;top:630px;width:39px;padding-right:1px;height:24px;padding-top:1px;line-height:25px;background:#f0f0f0;color:#10b;">负</div>
<div class="c" style="left:927px;top:630px;width:39px;padding-right:1px;height:24px;padding-top:1px;line-height:25px;background:#f0f0f0;color:#10b;">输</div>
<div class="c" style="left:968px;top:630px;width:60px;padding-right:1px;height:24px;padding-top:1px;line-height:25px;background:#f0f0f0;color:#10b;">小</div>
<div class="c ty" style="left:3px;top:656px;width:79px;padding-right:1px;height:24px;padding-top:1px;line-height:25px;background:#fa9c0d;color:#fff;">欧国联</div>
<div class="c" style="left:84px;top:656px;width:79px;padding-right:1px;height:24px;padding-top:1px;line-height:25px;background:#fff;">24-11-20</div>
<div class="c" style="left:165px;top:656px;width:71px;padding-right:1px;height:24px;padding-top:1px;line-height:25px;background:#fff;"><span class="rc">1</span><span class="g">马耳他</span></div>
<div class="c" style="left:238px;top:656px;width:95px;padding-right:1px;height:24px;padding-top:1px;line-height:25px;background:#fff;"><span class="r">0-0</span>(0-0)</div>
<div class="c" style="left:335px;top:656px;width:38px;padding-right:1px;height:24px;padding-top:1px;line-height:25px;background:#fff;">2-4</div>
<div class="c" style="left:375px;top:656px;width:98px;padding-right:1px;height:24px;padding-top:1px;line-height:25px;background:#fff;">安道尔</div>
<div class="c" style="left:475px;top:656px;width:50px;padding-right:1px;height:24px;padding-top:1px;line-height:25px;background:#fdf8f6;">0.80</div>
<div class="c" style="left:527px;top:656px;width:88px;padding-right:1px;height:24px;padding-top:1px;line-height:25px;background:#fdf8f6;">半/一</div>
<div class="c" style="left:617px;top:656px;width:53px;padding-right:1px;height:24px;padding-top:1px;line-height:25px;background:#fdf8f6;">1.09</div>
<div class="c" style="left:672px;top:656px;width:69px;padding-right:1px;height:24px;padding-top:1px;line-height:25px;background:#eef6fa;">1.59</div>
<div class="c" style="left:743px;top:656px;width:69px;padding-right:1px;height:24px;padding-top:1px;line-height:25px;background:#eef6fa;">3.37</div>
<div class="c" style="left:814px;top:656px;width:70px;padding-right:1px;height:24px;padding-top:1px;line-height:25px;background:#eef6fa;">7.24</div>
<div class="c" style="left:886px;top:656px;width:39px;padding-right:1px;height:24px;padding-top:1px;line-height:25px;background:#fff;color:#282;">平</div>
<div class="c" style="left:927px;top:656px;width:39px;padding-right:1px;height:24px;padding-top:1px;line-height:25px;background:#fff;color:#10b;">输</div>
<div class="c" style="left:968px;top:656px;width:60px;padding-right:1px;height:24px;padding-top:1px;line-height:25px;background:#fff;color:#10b;">小</div>
<div class="c ty" style="left:3px;top:682px;width:79px;padding-right:1px;height:24px;padding-top:1px;line-height:25px;background:#4664bd;color:#fff;">国际友谊</div>
<div class="c" style="left:84px;top:682px;width:79px;padding-right:1px;height:24px;padding-top:1px;line-height:25px;background:#f0f0f0;">24-11-15</div>
<div class="c" style="left:165px;top:682px;width:71px;padding-right:1px;height:24px;padding-top:1px;line-height:25px;background:#f0f0f0;"><span class="g">马耳他</span></div>
<div class="c" style="left:238px;top:682px;width:95px;padding-right:1px;height:24px;padding-top:1px;line-height:25px;background:#f0f0f0;"><span class="r">2-0</span>(0-0)</div>
<div class="c" style="left:335px;top:682px;width:38px;padding-right:1px;height:24px;padding-top:1px;line-height:25px;background:#f0f0f0;">8-0</div>
<div class="c" style="left:375px;top:682px;width:98px;padding-right:1px;height:24px;padding-top:1px;line-height:25px;background:#f0f0f0;">列支敦士登</div>
<div class="c" style="left:475px;top:682px;width:50px;padding-right:1px;height:24px;padding-top:1px;line-height:25px;background:#fdf8f6;">0.86</div>
<div class="c" style="left:527px;top:682px;width:88px;padding-right:1px;height:24px;padding-top:1px;line-height:25px;background:#fdf8f6;">一球</div>
<div class="c" style="left:617px;top:682px;width:53px;padding-right:1px;height:24px;padding-top:1px;line-height:25px;background:#fdf8f6;">0.96</div>
<div class="c" style="left:672px;top:682px;width:69px;padding-right:1px;height:24px;padding-top:1px;line-height:25px;background:#eef6fa;">1.41</div>
<div class="c" style="left:743px;top:682px;width:69px;padding-right:1px;height:24px;padding-top:1px;line-height:25px;background:#eef6fa;">4.00</div>
<div class="c" style="left:814px;top:682px;width:70px;padding-right:1px;height:24px;padding-top:1px;line-height:25px;background:#eef6fa;">8.04</div>
<div class="c" style="left:886px;top:682px;width:39px;padding-right:1px;height:24px;padding-top:1px;line-height:25px;background:#f0f0f0;color:#d22;">胜</div>
<div class="c" style="left:927px;top:682px;width:39px;padding-right:1px;height:24px;padding-top:1px;line-height:25px;background:#f0f0f0;color:#d22;">赢</div>
<div class="c" style="left:968px;top:682px;width:60px;padding-right:1px;height:24px;padding-top:1px;line-height:25px;background:#f0f0f0;color:#10b;">小</div>
<div class="c" style="left:3px;top:708px;width:1025px;padding-right:1px;height:24px;padding-top:1px;line-height:25px;background:#fff;letter-spacing:.22px;">近<span class="r">10</span>场,胜2平3负5, 胜率:<span class="r">20%</span> 让胜率:<span class="r">30%</span> 大率:<span class="r">30%</span> 单率:<span class="r">20%</span></div>
</body></html>
